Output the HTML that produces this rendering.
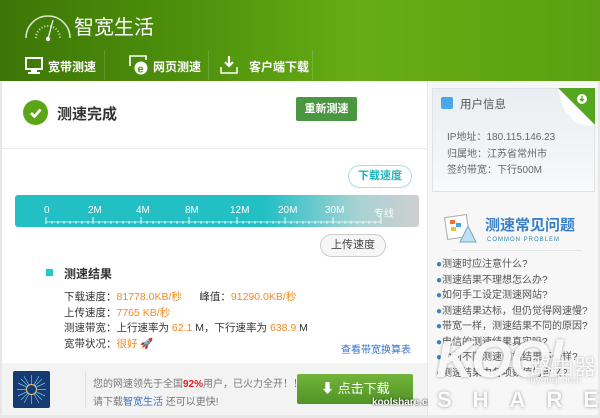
<!DOCTYPE html><html><head><meta charset="utf-8"><style>
*{margin:0;padding:0;box-sizing:border-box}
body{width:600px;height:418px;overflow:hidden;position:relative;background:#e8e8e8;font-family:"Liberation Sans","Noto Sans CJK SC",sans-serif;font-size:11px;color:#333}
.a{position:absolute;white-space:nowrap}
#hd{left:0;top:0;width:600px;height:81px;background:linear-gradient(90deg,#3c7606 0%,#4d8f0c 30%,#66ad14 60%,#5aa012 100%)}
.nav{color:#fff;font-size:12px;font-weight:bold}
.sep{top:50px;width:1px;height:30px;background:rgba(255,255,255,.15)}
.or{color:#f08a24}
.lk{color:#3a72c8}
</style></head><body>
<div class="a" id="hd"></div>
<svg class="a" style="left:22px;top:8px" width="52" height="34" viewBox="0 0 52 34"><path d="M4 30 A22 22 0 0 1 48 30" fill="none" stroke="#fff" stroke-width="1.5" opacity=".8"/><path d="M14 30 A12 12 0 0 1 38 30" fill="none" stroke="#fff" stroke-width="2" stroke-dasharray="1 2" opacity=".8"/><line x1="26" y1="31" x2="31" y2="12" stroke="#fff" stroke-width="1.2"/><circle cx="26" cy="31" r="2.2" fill="#fff"/></svg>
<div class="a" style="left:74px;top:11px;color:#fff;font-size:20px">智宽生活</div>
<svg class="a" style="left:25px;top:57px" width="18" height="17"><rect x="1" y="1" width="16" height="11" fill="none" stroke="#fff" stroke-width="2"/><rect x="6" y="13" width="6" height="2" fill="#fff"/><rect x="3" y="15" width="12" height="2" fill="#fff"/></svg>
<div class="a nav" style="left:48px;top:58px">宽带测速</div>
<div class="a sep" style="left:104px"></div>
<svg class="a" style="left:128px;top:54px" width="22" height="22"><path d="M2 12V2h16v4" fill="none" stroke="#fff" stroke-width="1.6"/><circle cx="13" cy="14" r="6.5" fill="#fff"/><text x="9.5" y="18.5" font-size="11" font-weight="bold" fill="#5a9e10" font-family="Liberation Sans">e</text></svg>
<div class="a nav" style="left:153px;top:58px">网页测速</div>
<div class="a sep" style="left:208px"></div>
<svg class="a" style="left:220px;top:55px" width="18" height="20"><path d="M9 1v10M5 7l4 4 4-4" fill="none" stroke="#fff" stroke-width="2.2"/><path d="M1 12v6h16v-6" fill="none" stroke="#fff" stroke-width="1.5"/></svg>
<div class="a nav" style="left:249px;top:58px">客户端下载</div>
<div class="a sep" style="left:312px"></div>
<div class="a" style="left:2px;top:81px;width:425px;height:334px;background:#fff"></div>
<div class="a" style="left:2px;top:148px;width:425px;height:1px;background:#ececec"></div>
<div class="a" style="left:23px;top:100px;width:25px;height:25px;border-radius:50%;background:#5ca516"></div>
<svg class="a" style="left:23px;top:100px" width="25" height="25"><path d="M8 13l3.5 3.5L17.5 9.5" fill="none" stroke="#fff" stroke-width="2.8"/></svg>
<div class="a" style="left:57px;top:103px;font-size:15px;font-weight:bold;color:#333">测速完成</div>
<div class="a" style="left:296px;top:97px;width:61px;height:24px;background:#4b9640;color:#fff;font-size:11px;font-weight:bold;text-align:center;line-height:24px;border-radius:2px">重新测速</div>
<div class="a" style="left:15px;top:195px;width:404px;height:32px;border-radius:3px;background:linear-gradient(90deg,#22c0c5 0%,#22c0c5 62%,#a8d2d4 85%,#cfcfcf 100%)"></div>
<svg class="a" style="left:40px;top:215px" width="350" height="10"><g stroke="#fff" stroke-width="1" opacity=".9"><path d="M6 2v7M53 2v7M101 2v7M149 2v7M197 2v7M245 2v7M293 2v7M341 2v7"/><path d="M6 7H341" stroke-width=".8"/></g><path d="M6 6v3M12 6v3M18 6v3M24 6v3M30 6v3M36 6v3M42 6v3M48 6v3M59 6v3M65 6v3M71 6v3M77 6v3M83 6v3M89 6v3M95 6v3M107 6v3M113 6v3M119 6v3M125 6v3M131 6v3M137 6v3M143 6v3M155 6v3M161 6v3M167 6v3M173 6v3M179 6v3M185 6v3M191 6v3M203 6v3M209 6v3M215 6v3M221 6v3M227 6v3M233 6v3M239 6v3M251 6v3M257 6v3M263 6v3M269 6v3M275 6v3M281 6v3M287 6v3M299 6v3M305 6v3M311 6v3M317 6v3M323 6v3M329 6v3M335 6v3" stroke="#fff" stroke-width=".8"/></svg>
<div class="a" style="left:0;top:205px;color:#fff;font-size:10px">
<span class="a" style="left:44px">0</span><span class="a" style="left:88px">2M</span><span class="a" style="left:136px">4M</span><span class="a" style="left:185px">8M</span><span class="a" style="left:230px">12M</span><span class="a" style="left:278px">20M</span><span class="a" style="left:325px">30M</span><span class="a" style="left:374px">专线</span></div>
<div class="a" style="left:348px;top:165px;width:64px;height:23px;border:1px solid #a9dfe1;border-radius:12px;background:#fff;color:#24b4bb;font-size:11px;font-weight:bold;text-align:center;line-height:21px">下载速度</div>
<div class="a" style="left:320px;top:234px;width:66px;height:23px;border:1px solid #ccc;border-radius:12px;background:#f6f6f6;color:#444;font-size:11px;text-align:center;line-height:21px">上传速度</div>
<div class="a" style="left:46px;top:269px;width:7px;height:7px;background:#22c8d0"></div>
<div class="a" style="left:64px;top:265px;font-size:12px;font-weight:bold">测速结果</div>
<div class="a" style="left:64px;top:290px;line-height:15.5px;font-size:10.5px">下载速度：<span class="or">81778.0KB/秒</span>&nbsp;&nbsp;&nbsp;&nbsp;&nbsp;&nbsp;峰值：<span class="or">91290.0KB/秒</span><br>上传速度：<span class="or">7765 KB/秒</span><br>测速带宽：上行速率为 <span class="or">62.1</span> M，下行速率为 <span class="or">638.9</span> M<br>宽带状况：<span class="or">很好</span> <span style="color:#aaa">🚀</span></div>
<div class="a lk" style="left:341px;top:341px;font-size:10px">查看带宽换算表</div>
<div class="a" style="left:2px;top:363px;width:425px;height:52px;background:#f3f3f3"></div>
<div class="a" style="left:13px;top:371px;width:37px;height:37px;background:#163a72;border-radius:2px"></div>
<svg class="a" style="left:13px;top:371px" width="37" height="37"><g stroke="#7cc4ea" stroke-width=".7"><path d="M18.5 4v29M4 18.5h29M8 8l21 21M29 8L8 29M11 5l15 27M26 5L11 32M5 12l27 13M32 12L5 25"/></g><circle cx="18.5" cy="18.5" r="5" fill="#163a72" stroke="#e8c96a"/></svg>
<div class="a" style="left:85px;top:371px;width:1px;height:37px;background:#dde"></div>
<div class="a" style="left:93px;top:375px;color:#777;font-size:10px">您的网速领先于全国<b style="color:#e02020">92%</b>用户，已火力全开！！</div>
<div class="a" style="left:93px;top:393px;color:#777;font-size:10px">请下载<span class="lk">智宽生活</span> 还可以更快!</div>
<div class="a" style="left:297px;top:374px;width:116px;height:30px;background:linear-gradient(#74b43c,#4f9324);border-radius:2px;color:#fff;font-size:13px;line-height:30px;padding-left:24px">⬇ 点击下载</div>
<div class="a" style="left:372px;top:397px;color:#fff;font-size:10px;font-weight:bold;text-shadow:0 0 2px #000">koolshare.cn</div>
<div class="a" style="left:428px;top:81px;width:170px;height:334px;background:#f7f7f7"></div>
<div class="a" style="left:432px;top:88px;width:163px;height:104px;background:linear-gradient(#e9eef2,#f7f9fa);border:1px solid #dde3e6"></div>
<svg class="a" style="left:558px;top:88px" width="37" height="40"><path d="M0 0H37V37Z" fill="#54a820"/><path d="M0 0L37 37Q20 40 12 28L6 22Q2 10 0 0Z" fill="#fff"/><circle cx="24" cy="11" r="5" fill="#fff"/><path d="M24 8v5M22 11l2 2 2-2" stroke="#54a820" stroke-width="1.3" fill="none"/></svg>
<div class="a" style="left:441px;top:97px;width:12px;height:12px;background:#49a8e8;border-radius:2px"></div>
<div class="a" style="left:460px;top:96px;font-size:11.5px;color:#555">用户信息</div>
<div class="a" style="left:447px;top:130px;line-height:16.5px;font-size:10px;color:#666">IP地址：180.115.146.23<br>归属地：江苏省常州市<br>签约带宽：下行500M</div>
<svg class="a" style="left:444px;top:214px" width="34" height="30"><rect x="2" y="2" width="22" height="22" fill="#fff" stroke="#aaa" transform="rotate(-8 13 13)"/><rect x="6" y="6" width="5" height="4" fill="#f07030"/><rect x="12" y="9" width="5" height="4" fill="#4aa0e0"/><rect x="7" y="13" width="5" height="4" fill="#f0c030"/><path d="M16 28L24 12L32 28Z" fill="#bfe0f0" stroke="#7ab"/></svg>
<div class="a" style="left:485px;top:214px;color:#3a80c8;font-size:15px;font-weight:bold">测速常见问题</div>
<div class="a" style="left:487px;top:237px;color:#2a8aaa;font-size:6px;letter-spacing:1px">COMMON PROBLEM</div>
<div class="a" style="left:452px;top:250px;width:130px;height:1px;background:#e6e6e6"></div>
<div class="a" style="left:436px;top:257px;line-height:15.5px;font-size:10px;color:#555"><span style="color:#3a80c8">●</span>测速时应注意什么?<br><span style="color:#3a80c8">●</span>测速结果不理想怎么办?<br><span style="color:#3a80c8">●</span>如何手工设定测速网站?<br><span style="color:#3a80c8">●</span>测速结果达标，但仍觉得网速慢?<br><span style="color:#3a80c8">●</span>带宽一样，测速结果不同的原因?<br><span style="color:#3a80c8">●</span>电信的测速结果真实吗?<br><span style="color:#3a80c8">●</span>为何不同测速网站结果不一样?<br><span style="color:#3a80c8">●</span>测速结果中各项数值的含义?</div>
<div class="a" style="left:436px;top:330px;color:rgba(255,255,255,.92);font-size:52px;font-weight:bold;font-style:italic;text-shadow:0 0 3px rgba(0,0,0,.35);letter-spacing:-2px">KOOl</div>
<div class="a" style="left:530px;top:350px;color:rgba(255,255,255,.9);font-size:22px;text-shadow:0 0 2px rgba(0,0,0,.3)">路由器</div>
<div class="a" style="left:528px;top:375px;color:rgba(255,255,255,.9);font-size:10px;text-shadow:0 0 2px rgba(0,0,0,.3)">luyouqi.com</div>
<div class="a" style="left:437px;top:387px;color:rgba(255,255,255,.95);font-size:22px;font-weight:bold;letter-spacing:21px;text-shadow:0 0 3px rgba(0,0,0,.4)">SHARE</div>
</body></html>
